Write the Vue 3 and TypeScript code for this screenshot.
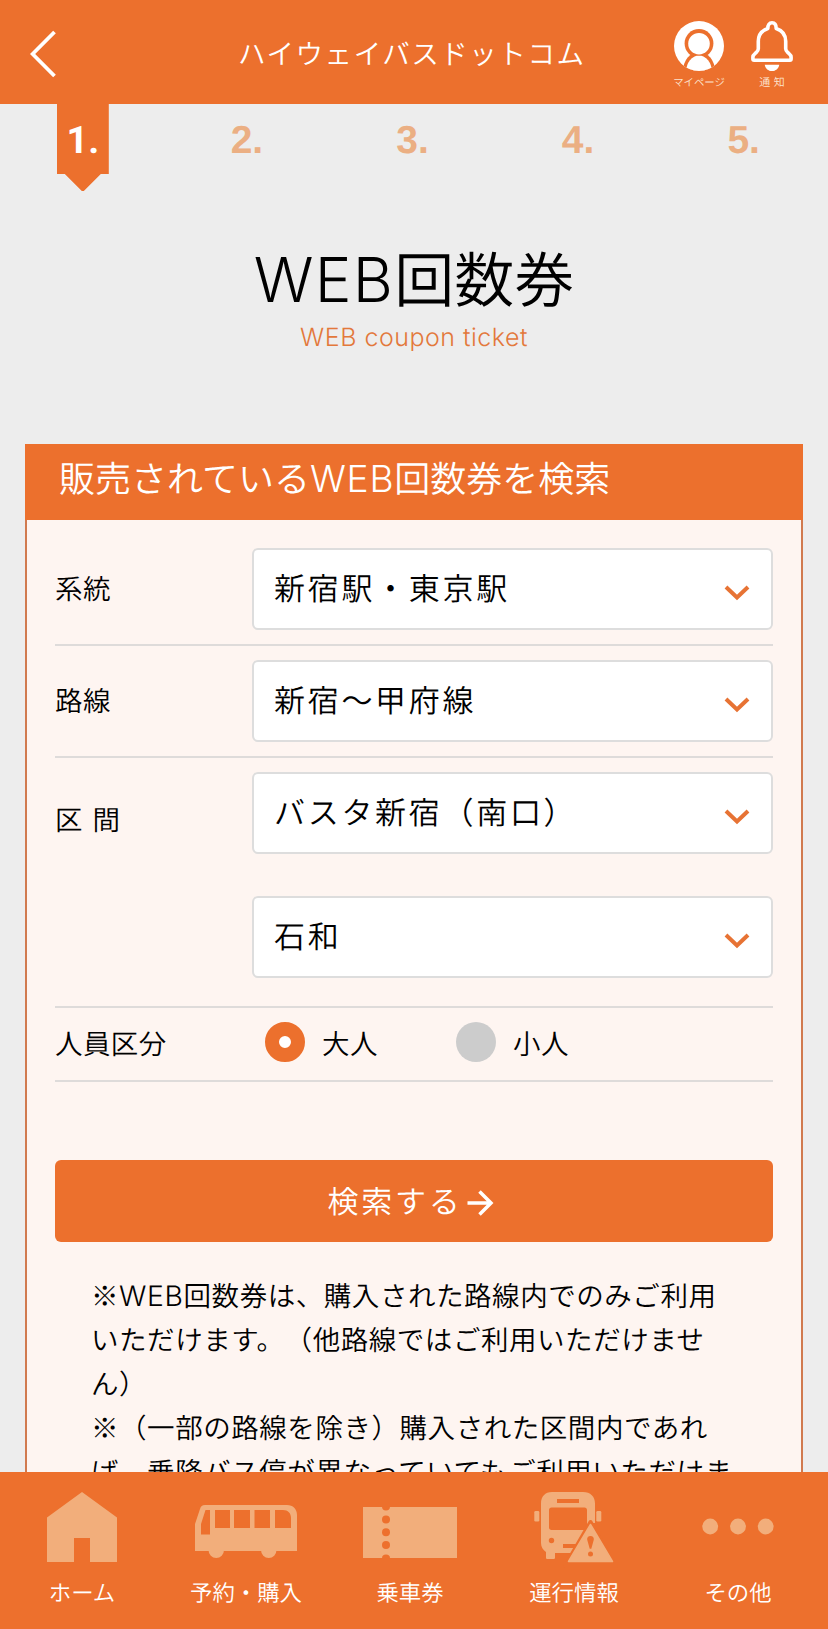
<script setup lang="ts">
import { ref } from 'vue'

interface Field {
  label: string
  spaced?: boolean
  values: string[]
}

const steps: string[] = ['1.', '2.', '3.', '4.', '5.']

const fields: Field[] = [
  { label: '系統', values: ['新宿駅・東京駅'] },
  { label: '路線', values: ['新宿〜甲府線'] },
  { label: '区 間', spaced: true, values: ['バスタ新宿（南口）', '石和'] },
]

const passengers: string[] = ['大人', '小人']
const passenger = ref('大人')
</script>

<template>
  <div class="page">
    <header class="bar">
      <button class="back" aria-label="戻る">
        <svg width="26" height="48" viewBox="0 0 26 48">
          <path d="M24.500 2 2.600 24 24.500 46" fill="none" stroke="#fff" stroke-width="3.800" />
        </svg>
      </button>
      <div class="brand">ハイウェイバスドットコム</div>
      <div class="actions">
        <div class="action">
          <svg width="52" height="52" viewBox="0 0 52 52">
            <defs>
              <clipPath id="avatar"><circle cx="26" cy="26" r="25" /></clipPath>
            </defs>
            <g clip-path="url(#avatar)">
              <rect width="52" height="52" fill="#fff" />
              <ellipse cx="26" cy="51" rx="16" ry="19" fill="#ec702d" />
              <circle cx="26" cy="23.500" r="14.400" fill="#ec702d" />
              <ellipse cx="26" cy="51.500" rx="12.800" ry="16" fill="#fff" />
              <circle cx="26" cy="23.500" r="12" fill="#ec702d" />
              <circle cx="26" cy="23.700" r="10.800" fill="#fff" />
            </g>
          </svg>
          <span>マイページ</span>
        </div>
        <div class="action bell">
          <svg width="52" height="52" viewBox="0 0 52 52">
            <path
              d="M21.800 8.500C21.800 4.900 23.400 2.800 26 2.800s4.200 2.100 4.200 5.700c6.300 2.100 9.500 7 9.500 12.800v7.400c0 1.500.6 2.500 2.200 3.900 1.700 1.500 3.200 2.300 3.200 4.400v2.100c0 .8-.4 1.200-1.200 1.200H8.100c-.8 0-1.200-.4-1.200-1.200v-2.100c0-2.100 1.500-2.900 3.200-4.400 1.600-1.400 2.200-2.400 2.200-3.900v-7.400c0-5.800 3.200-10.700 9.500-12.800Z"
              fill="none" stroke="#fff" stroke-width="3.600" stroke-linejoin="round"
            />
            <path d="M18.700 44.700h14.600c-.8 4-3.600 6.300-7.300 6.300s-6.500-2.300-7.300-6.300Z" fill="#fff" />
          </svg>
          <span>通 知</span>
        </div>
      </div>
    </header>

    <main class="content">
      <ol class="steps">
        <li v-for="(step, i) in steps" :key="step" :class="{ current: i === 0 }">
          <span>{{ step }}</span>
        </li>
      </ol>

      <h1><span class="latin">WEB</span>回数券</h1>
      <p class="subtitle">WEB coupon ticket</p>

      <section class="card">
        <h2>販売されている<span class="latin">WEB</span>回数券を検索</h2>
        <div class="form">
          <div v-for="field in fields" :key="field.label" class="row">
            <div class="label" :class="{ spaced: field.spaced }">{{ field.label }}</div>
            <div class="controls">
              <div v-for="value in field.values" :key="value" class="select">
                <span>{{ value }}</span>
                <svg width="26" height="18" viewBox="0 0 26 18">
                  <path d="M2 3 13 13.500 24 3" fill="none" stroke="#e77334" stroke-width="4" />
                </svg>
              </div>
            </div>
          </div>
          <div class="row people">
            <div class="label">人員区分</div>
            <div class="radios">
              <label v-for="p in passengers" :key="p" class="radio" @click="passenger = p">
                <i :class="{ on: passenger === p }"></i>{{ p }}
              </label>
            </div>
          </div>
          <button class="submit">
            <span>検索する</span>
            <svg width="28" height="28" viewBox="0 0 28 28">
              <path d="M1.500 14h23M13.500 2.500 25 14 13.500 25.500" fill="none" stroke="#fff" stroke-width="3.500" />
            </svg>
          </button>
          <div class="notes">
            ※<span class="latin">WEB</span>回数券は、購入された路線内でのみご利用<br />いただけます。（他路線ではご利用いただけませ<br />ん）<br />※（一部の路線を除き）購入された区間内であれ<br />ば、乗降バス停が異なっていてもご利用いただけま
          </div>
        </div>
      </section>
    </main>

    <nav class="tabs">
      <a class="tab">
        <svg viewBox="0 0 164 100">
          <path d="M82 20 117 45.500V90H90V66H74v24H47V45.500Z" />
        </svg>
        <span>ホーム</span>
      </a>
      <a class="tab">
        <svg viewBox="0 0 164 100">
          <path
            fill-rule="evenodd"
            d="M41 33h82c6 0 10 4 10 10v36H31V52l5-15c1-3 2-4 5-4ZM41.500 38 37 52v10.500h9V38ZM51 38v18h15V38ZM70 38v18h16V38ZM90.500 38v18h15.500V38ZM111 38v18h16V46c0-5-3-8-8-8Z"
          />
          <path d="M44.500 78h15.500a7.700 8 0 1 1-15.500 0ZM97 78h15.500a7.700 8 0 1 1-15.500 0Z" />
        </svg>
        <span>予約・購入</span>
      </a>
      <a class="tab">
        <svg viewBox="0 0 164 100">
          <path d="M35 35h94v51H35Z" />
          <g fill="#ed702d">
            <path d="M54 34.800h8a4 3.600 0 0 1-8 0ZM54 86.200h8a4 3.600 0 0 0-8 0Z" />
            <circle cx="58" cy="47.500" r="4" />
            <circle cx="58" cy="60.300" r="4" />
            <circle cx="58" cy="73" r="4" />
          </g>
        </svg>
        <span>乗車券</span>
      </a>
      <a class="tab">
        <svg viewBox="0 0 164 100">
          <path
            fill-rule="evenodd"
            d="M60 20h31c7.500 0 12 4.500 12 11.500V51h-4v30H63v4.500c0 1-.6 1.500-1.500 1.500h-6c-1 0-1.500-.5-1.500-1.500V80c-3-2-5-5-5-9V31.500C49 24.500 53 20 60 20ZM65 27v4h22v-4ZM59.500 35.500c-1.500 0-2.500 1-2.500 2.500v17.500c0 1.500 1 2.500 2.500 2.500h33c1.500 0 2.500-1 2.500-2.500V38c0-1.500-1-2.500-2.500-2.500ZM71 72v4h14v-4Z"
          />
          <rect x="42.300" y="39" width="5" height="10.500" rx="1.300" />
          <rect x="104.300" y="39" width="5" height="10.500" rx="1.300" />
          <circle cx="59.500" cy="68.500" r="2.700" fill="#ed702d" />
          <path d="M98.500 50 124 94H73Z" fill="#ed702d" stroke="#ed702d" stroke-width="4" stroke-linejoin="round" />
          <path d="M98.500 52.500 120.500 89.500h-44Z" stroke="#f2ae7b" stroke-width="1.500" stroke-linejoin="round" />
          <path d="M98.500 64c2.300 0 3.600 1.500 3.300 3.800l-2.500 9h-1.600l-2.500-9c-.3-2.300 1-3.800 3.300-3.800Z" fill="#ed702d" />
          <circle cx="98.500" cy="82" r="2.500" fill="#ed702d" />
        </svg>
        <span>運行情報</span>
      </a>
      <a class="tab">
        <svg viewBox="0 0 164 100">
          <circle cx="54.200" cy="54.500" r="7.900" />
          <circle cx="82" cy="54.500" r="7.900" />
          <circle cx="109.700" cy="54.500" r="7.900" />
        </svg>
        <span>その他</span>
      </a>
    </nav>
  </div>
</template>

<style>
body {
  margin: 0;
  background: #ededed;
}
</style>

<style scoped>
.page {
  display: flex;
  flex-direction: column;
  width: 828px;
  height: 1629px;
  overflow: hidden;
  background: #ededed;
  color: #000;
  font-family: 'Noto Sans CJK JP', sans-serif;
  font-weight: 350;
  text-spacing-trim: space-all;
  text-rendering: geometricPrecision;
  white-space: nowrap;
}

button {
  border: 0;
  padding: 0;
  background: none;
  color: inherit;
  font: inherit;
  text-rendering: inherit;
}

.bar {
  flex: none;
  display: grid;
  grid-template-columns: 238px 1fr 240px;
  height: 104px;
  background: #ec702d;
  color: #fff;
}

.back {
  display: flex;
  align-items: center;
  padding: 4px 0 0 30px;
  height: 104px;
}

.brand {
  font-size: 27.5px;
  letter-spacing: 1.55px;
  line-height: 104px;
}

.actions {
  display: flex;
  padding: 20px 0 0 85px;
  gap: 21px;
}

.action {
  display: flex;
  flex-direction: column;
  align-items: center;
  width: 52px;
  font-size: 10.4px;
  color: #fce3cf;
}

.action svg {
  flex: none;
}

.action span {
  line-height: 16px;
  margin-top: 2px;
}

.bell span {
  font-size: 11px;
  word-spacing: 1px;
}

.steps {
  display: grid;
  grid-template-columns: repeat(5, 1fr);
  height: 87px;
  margin: 0;
  padding: 0;
  list-style: none;
  font: 700 39px/74px 'Liberation Sans', sans-serif;
  color: #ebaf83;
  text-align: center;
}

.steps li:not(.current) {
  padding-right: 3px;
}

.steps .current {
  justify-self: center;
  width: 52px;
  height: 87px;
  color: #fff;
  font-family: Roboto, sans-serif;
  font-size: 38px;
  background: #ec702d;
  clip-path: polygon(0 0, 100% 0, 100% 70px, 44px 70px, 26px 88px, 8px 70px, 0 70px);
}

h1 {
  margin: 36px 0 0;
  font-size: 60px;
  font-weight: 350;
  line-height: 100px;
  text-align: center;
}

.subtitle {
  margin: -14px 0 0;
  font-family: Inter, sans-serif;
  font-weight: 350;
  font-size: 25px;
  line-height: 50px;
  letter-spacing: 0.5px;
  color: #e3783b;
  text-align: center;
}

.content {
  flex: 1;
  min-height: 0;
  overflow: hidden;
}

.card {
  margin: 81px 25px 0;
  border: 2px solid #d17a4f;
  border-top: 0;
  background: #fef5f1;
}

h2 {
  margin: 0 -2px;
  padding-left: 34px;
  height: 76px;
  background: #ec702d;
  color: #fff;
  font-size: 36px;
  font-weight: 350;
  line-height: 66px;
}

.form {
  padding: 14px 28px 0;
}

.row {
  display: grid;
  grid-template-columns: 197px 1fr;
  padding: 14px 0;
  border-bottom: 2px solid #dedbda;
}

.row:nth-child(3) {
  padding-bottom: 28px;
}

.label {
  font-size: 27.5px;
  letter-spacing: 0.4px;
  line-height: 78px;
}

.spaced {
  padding-top: 7px;
  word-spacing: 3px;
}

.controls {
  display: grid;
  gap: 42px;
}

.select {
  display: flex;
  align-items: flex-start;
  justify-content: space-between;
  box-sizing: border-box;
  height: 82px;
  padding: 0 21px 0 20px;
  border: 2px solid #dddddd;
  border-radius: 6px;
  background: #fff;
  font-size: 31px;
  letter-spacing: 2.7px;
  line-height: 74px;
}

.select svg {
  margin-top: 34px;
}

.people {
  height: 72px;
  padding: 0;
}

.people .label,
.radio {
  line-height: 68px;
}

.radios {
  display: flex;
  padding-left: 13px;
}

.radio {
  display: flex;
  width: 191px;
  font-size: 27.5px;
  letter-spacing: 0.5px;
}

.radio i {
  box-sizing: border-box;
  width: 40px;
  height: 40px;
  margin: 14px 17px 0 0;
  border-radius: 50%;
  background: #ccc;
}

.radio .on {
  border: 14px solid #ec702d;
  background: #fff;
}

.submit {
  display: flex;
  align-items: flex-start;
  justify-content: center;
  gap: 3px;
  width: 100%;
  height: 82px;
  margin-top: 78px;
  padding-right: 7px;
  border-radius: 6px;
  background: #ec702d;
  color: #fff;
  font-size: 31px;
  letter-spacing: 2.8px;
  line-height: 80px;
}

.submit svg {
  margin-top: 29px;
}

.notes {
  padding: 30px 0 0 36px;
  font-size: 27.5px;
  letter-spacing: 0.55px;
  line-height: 44px;
}

.latin {
  font-family: Inter, sans-serif;
  font-weight: 350;
  font-size: 1.03em;
  letter-spacing: 0.022em;
  line-height: 1;
}

.tabs {
  flex: none;
  display: grid;
  grid-template-columns: repeat(5, 164px);
  height: 157px;
  background: #ed702d;
  color: #fff;
}

.tab {
  display: flex;
  flex-direction: column;
  align-items: center;
  font-size: 22.4px;
}

.tab svg {
  width: 164px;
  height: 100px;
  fill: #f2ae7b;
}

.tab span {
  line-height: 40px;
}
</style>
